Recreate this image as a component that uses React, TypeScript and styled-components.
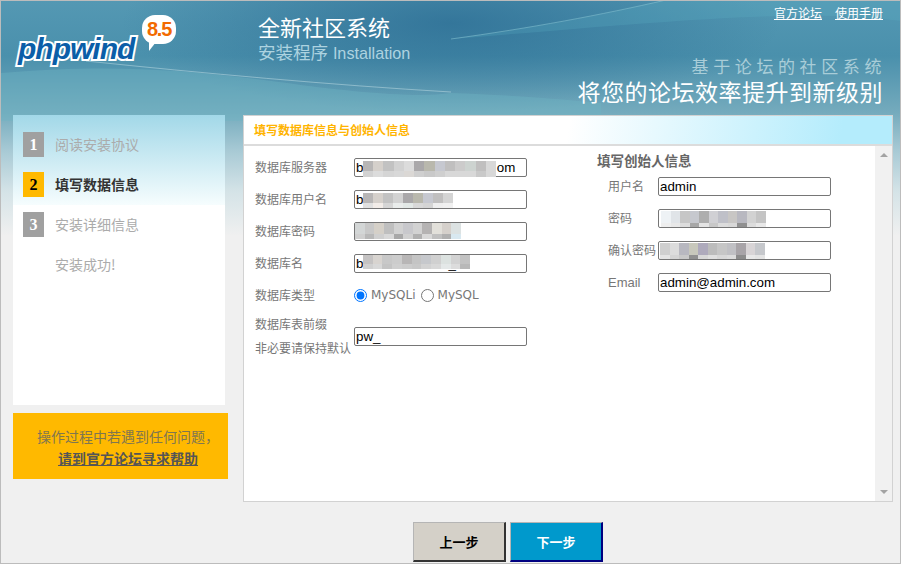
import React from 'react';
import styled, { createGlobalStyle } from 'styled-components';

const GlobalStyle = createGlobalStyle`
  html, body {
    margin: 0;
    padding: 0;
    background: #f0f0f0;
  }
  body {
    font-family: "Liberation Sans", "Noto Sans CJK SC", sans-serif;
  }
`;

const CJK = `"Noto Sans CJK SC", "Liberation Sans", sans-serif`;
const HEAD = `"Liberation Sans", "Noto Sans CJK SC", sans-serif`;

const Page = styled.div`
  position: relative;
  box-sizing: border-box;
  width: 901px;
  height: 564px;
  overflow: hidden;
  border: 1px solid #bcbcbc;
  background:
    radial-gradient(ellipse 330px 90px at 450px 22px, rgba(40, 105, 145, 0.7), rgba(40, 105, 145, 0) 100%),
    linear-gradient(180deg, #5498b3 0, #4a90ac 55px, #75abbd 112px, #a8cad5 150px, #d4e3e7 190px, #f0f0f0 235px);
`;

const Swoosh = styled.svg`
  position: absolute;
  left: 0;
  top: 0;
`;

const Header = styled.header`
  position: relative;
  display: flex;
  height: 114px;
  padding: 0 17px 0 14px;
`;

const Logo = styled.div`
  position: relative;
  width: 243px;
  flex: none;
`;

const LogoWord = styled.span`
  position: absolute;
  left: 3px;
  top: 31px;
  font: italic bold 30px "Liberation Sans", sans-serif;
  letter-spacing: -1px;
  color: #0b5ea8;
  -webkit-text-stroke: 4px #fff;
  paint-order: stroke fill;
`;

const Bubble = styled.span`
  position: absolute;
  left: 127px;
  top: 14px;
  width: 34px;
  height: 29px;
  border-radius: 13px;
  background: #fff;
  color: #f26a00;
  font: bold 20px/28px "Liberation Sans", sans-serif;
  letter-spacing: -1.2px;
  text-align: center;

  &::after {
    content: '';
    position: absolute;
    left: 7px;
    top: 27px;
    border-top: 9px solid #fff;
    border-right: 7px solid transparent;
  }
`;

const Product = styled.div`
  padding-top: 15px;
  font-family: ${HEAD};
`;

const ProductName = styled.div`
  font-size: 22px;
  line-height: 26px;
  color: #fff;
`;

const ProductSub = styled.div`
  font-size: 17.5px;
  line-height: 22px;
  color: #add3e0;

  span {
    font: 16.2px "Liberation Sans", sans-serif;
  }
`;

const Aside = styled.div`
  margin-left: auto;
  display: flex;
  flex-direction: column;
  align-items: flex-end;
  font-family: ${HEAD};
`;

const TopLinks = styled.nav`
  display: flex;
  gap: 13px;
  padding-top: 5px;
  height: 40px;
`;

const TopLink = styled.a`
  font-size: 12px;
  line-height: 16px;
  color: #fff;
  text-decoration: underline;
`;

const Slogan = styled.div`
  margin-top: 12px;
  margin-right: -3px;
  font-size: 17px;
  line-height: 20px;
  letter-spacing: 4.6px;
  color: #a9cdd8;
`;

const Tagline = styled.div`
  margin-top: 2px;
  font-size: 23px;
  line-height: 27px;
  letter-spacing: 0.5px;
  color: #fff;
`;

const Columns = styled.div`
  position: relative;
  display: flex;
  gap: 15px;
  padding: 0 7px 0 12px;
`;

const Side = styled.div`
  width: 215px;
  flex: none;
  display: flex;
  flex-direction: column;
  gap: 8px;
`;

const Steps = styled.ol`
  box-sizing: border-box;
  width: 212px;
  height: 290px;
  margin: 0;
  padding: 17px 0 0 10px;
  list-style: none;
  display: flex;
  flex-direction: column;
  gap: 15px;
  background: linear-gradient(180deg, #a2d8e8 0, #f6fdfe 90px, #fff 90px);
`;

const Step = styled.li`
  display: flex;
  align-items: center;
  gap: 11px;
  height: 25px;
`;

const StepNo = styled.span<{ $active?: boolean; $blank?: boolean }>`
  width: 21px;
  height: 25px;
  flex: none;
  text-align: center;
  font: bold 16px/25px "Liberation Serif", serif;
  color: ${(p) => (p.$active ? '#000' : '#fff')};
  background: ${(p) => (p.$blank ? 'transparent' : p.$active ? '#ffb900' : '#a0a0a0')};
`;

const StepLabel = styled.span<{ $active?: boolean }>`
  padding-bottom: 2px;
  font-family: ${CJK};
  font-size: 14px;
  font-weight: ${(p) => (p.$active ? 700 : 400)};
  color: ${(p) => (p.$active ? '#333' : '#ababab')};
`;

const Help = styled.div`
  box-sizing: border-box;
  height: 66px;
  padding: 12px 0 0 15px;
  background: #ffb900;
  font-family: ${CJK};
  font-size: 14px;
  line-height: 22px;
  color: #7f7650;
  text-align: center;

  a {
    display: block;
    font-weight: 700;
    color: #555;
    text-decoration: underline;
  }
`;

const Panel = styled.section`
  box-sizing: border-box;
  width: 650px;
  height: 387px;
  border: 1px solid #d2d2d2;
  background: #fff;
  display: flex;
  flex-direction: column;
`;

const PanelTitle = styled.h2`
  box-sizing: border-box;
  height: 30px;
  margin: 0;
  padding-left: 10px;
  border-bottom: 2px solid #dcdcdc;
  background: linear-gradient(100deg, #fff 50%, #b4ecfc 92%);
  font: 700 12px/28px ${CJK};
  color: #ffb400;
`;

const PanelBody = styled.div`
  flex: 1;
  display: flex;
  min-height: 0;
`;

const FormArea = styled.div`
  flex: 1;
  display: flex;
  padding: 5px 0 0 11px;
`;

const DbColumn = styled.div`
  width: 342px;
  flex: none;
`;

const FounderColumn = styled.div`
  width: 260px;
  flex: none;
`;

const FounderHeading = styled.h3`
  margin: 0;
  height: 19px;
  font: 700 13.5px/18px ${CJK};
  color: #666;
`;

const Row = styled.div<{ $tall?: boolean; $indent?: boolean }>`
  display: flex;
  align-items: center;
  height: ${(p) => (p.$tall ? 50 : 32)}px;
  padding-left: ${(p) => (p.$indent ? 11 : 0)}px;
`;

const RowLabel = styled.label<{ $wide?: boolean }>`
  width: ${(p) => (p.$wide ? 50 : 99)}px;
  flex: none;
  font-family: ${CJK};
  font-size: 12px;
  line-height: 24px;
  color: #777;
  white-space: nowrap;

  b {
    font: 13px "Liberation Sans", sans-serif;
  }
`;

const FieldWrap = styled.div`
  position: relative;
  width: 173px;
  height: 19px;
`;

const Field = styled.input`
  box-sizing: border-box;
  display: block;
  width: 173px;
  height: 19px;
  margin: 0;
  padding: 0 1px;
  border: 1px solid #767676;
  border-radius: 2px;
  outline: none;
  background: #fff;
  font: 13.33px "Liberation Sans", sans-serif;
  color: #000;
`;

const Mosaic = styled.div<{ $left: number; $top: number; $w: number; $cols: number; $h: string }>`
  position: absolute;
  left: ${(p) => p.$left}px;
  top: ${(p) => p.$top}px;
  width: ${(p) => p.$w}px;
  display: grid;
  grid-template-columns: repeat(${(p) => p.$cols}, 1fr);
  grid-template-rows: ${(p) => p.$h};
  pointer-events: none;
`;

const Cell = styled.i<{ $c: string }>`
  background: ${(p) => p.$c};
`;

const RadioGroup = styled.div`
  display: flex;
  align-items: center;
  font: 12px "DejaVu Sans", sans-serif;
  color: #777;
`;

const Radio = styled.input`
  width: 13px;
  height: 13px;
  margin: 0 4px 0 0;
`;

const RadioText = styled.span`
  margin-right: 5px;
`;

const Scrollbar = styled.div`
  width: 17px;
  flex: none;
  background: #f1f1f1;
  display: flex;
  flex-direction: column;
  justify-content: space-between;
  align-items: center;
  padding: 7px 0;
  box-sizing: border-box;
`;

const Arrow = styled.span<{ $down?: boolean }>`
  width: 0;
  height: 0;
  border-left: 4px solid transparent;
  border-right: 4px solid transparent;
  ${(p) => (p.$down ? 'border-top: 4px solid #a3a3a3;' : 'border-bottom: 4px solid #a3a3a3;')}
`;

const Actions = styled.div`
  position: relative;
  display: flex;
  gap: 4px;
  padding: 20px 0 0 412px;
`;

const StepButton = styled.button<{ $primary?: boolean }>`
  box-sizing: border-box;
  width: 93px;
  height: 40px;
  padding: 0;
  border-style: solid;
  border-width: 1px 2px 2px 1px;
  border-color: ${(p) =>
    p.$primary ? '#b5b5b5 #000080 #000080 #b5b5b5' : '#b5b5b5 #333 #333 #b5b5b5'};
  background: ${(p) => (p.$primary ? '#0099cc' : '#d4d0c8')};
  color: ${(p) => (p.$primary ? '#fff' : '#000')};
  font: 700 13px ${CJK};
`;

interface MaskSpec {
  left: number;
  top: number;
  w: number;
  h: string;
  rows: string[][];
}

interface FieldSpec {
  label: React.ReactNode;
  value: string;
  mask?: MaskSpec;
}

const dbFields: FieldSpec[] = [
  {
    label: '数据库服务器',
    value: 'b' + ' '.repeat(36) + 'om',
    mask: {
      left: 9,
      top: 3,
      w: 133,
      h: '10px 6px',
      rows: [
        ['#b8b6b6', '#d5d0cb', '#c2c2c2', '#d2d2d2', '#dcdcdc', '#aaa8aa', '#b9b8ad', '#c6c8d0', '#c0bfbf', '#cccbcb', '#cdd3d0', '#c0bfbf', '#d8d8d8'],
        ['#d2d2d2', '#dcdcdc', '#d5d5d5', '#d8d8d8', '#dbd8d5', '#cfcfcf', '#c9c9c9', '#cfcfcf', '#d8d8d8', '#d8d8d8', '#d8d8d8', '#c9c9c9', '#d8d8d8'],
      ],
    },
  },
  {
    label: '数据库用户名',
    value: 'b',
    mask: {
      left: 9,
      top: 3,
      w: 90,
      h: '10px 5px',
      rows: [
        ['#b8b6b6', '#d5d0cb', '#c2c2c2', '#d2d2d2', '#aaa8aa', '#b9b8ad', '#c6c8d0', '#c0bfbf', '#d4d4d4'],
        ['#e0e0e0', '#f2ece8', '#d5d5d5', '#e9eceb', '#e2e8e6', '#d8d8d8', '#d4d4d4', '#eeeeee', '#f0f0f0'],
      ],
    },
  },
  {
    label: '数据库密码',
    value: '',
    mask: {
      left: 1,
      top: 1,
      w: 106,
      h: '11px 5px',
      rows: [
        ['#d3d6d6', '#c8c8c8', '#d5d0c8', '#bfbfbf', '#d2d2d2', '#c8c8cc', '#d2d2d2', '#b5b3b3', '#e2e0da', '#d5d0cb', '#dce2e2'],
        ['#cfcfcf', '#b8b8b8', '#cfcfcf', '#d8d8d8', '#a8a8a8', '#d0d0d0', '#b0b0b0', '#d8d8d8', '#c0c0c0', '#b0b0b0', '#d8e8f0'],
      ],
    },
  },
  {
    label: '数据库名',
    value: 'b' + ' '.repeat(23) + '_',
    mask: {
      left: 9,
      top: 1,
      w: 107,
      h: '9px 5px',
      rows: [
        ['#c5c3c3', '#d8d4d0', '#c8c8c8', '#cccccc', '#b8b6b6', '#c4c4c4', '#c6c8cc', '#d0d0d0', '#dce2e0', '#d2d2d2', '#c2c2c2'],
        ['#d0d0d0', '#d8d8d8', '#c4c4c4', '#cfcfcf', '#cccccc', '#c8c8c8', '#d2d2d2', '#d8d8d8', '#e4e8e8', '#dcdcdc', '#b8b8b8'],
      ],
    },
  },
];

const founderFields: FieldSpec[] = [
  { label: '用户名', value: 'admin' },
  {
    label: '密码',
    value: '',
    mask: {
      left: 3,
      top: 2,
      w: 105,
      h: '12px 4px',
      rows: [
        ['#eef2f5', '#e0e4e8', '#c6c6c6', '#c6c8ce', '#aeaeae', '#d0d0d4', '#bfc0c8', '#c8c6c4', '#b8b8c0', '#d2d2d2', '#c4c4c4'],
        ['#eeeeee', '#e8e8e8', '#dcdcdc', '#a8a8a8', '#e4e4e4', '#c8c8c8', '#dcdcdc', '#d8d8d8', '#909090', '#dcdcdc', '#e8e8e8'],
      ],
    },
  },
  {
    label: '确认密码',
    value: '',
    mask: {
      left: 2,
      top: 2,
      w: 105,
      h: '12px 4px',
      rows: [
        ['#cfcfcf', '#dcdcdc', '#b8b8c0', '#c8c8bc', '#aeaabc', '#bcbcbc', '#c6c6c6', '#c0c0c4', '#a8a4a8', '#d8d4d6', '#c6c8cc'],
        ['#e4e4e4', '#d4d4d4', '#c8c8c8', '#909090', '#d8d8d8', '#e0e0e0', '#d8d8d8', '#dcdcdc', '#8c8c8c', '#e8e8e8', '#e4e4e4'],
      ],
    },
  },
  { label: <b>Email</b>, value: 'admin@admin.com' },
];

const MaskedField: React.FC<{ field: FieldSpec }> = ({ field }) => (
  <FieldWrap>
    <Field type="text" value={field.value} readOnly />
    {field.mask && (
      <Mosaic
        $left={field.mask.left}
        $top={field.mask.top}
        $w={field.mask.w}
        $cols={field.mask.rows[0].length}
        $h={field.mask.h}
      >
        {field.mask.rows.flat().map((c, i) => (
          <Cell key={i} $c={c} />
        ))}
      </Mosaic>
    )}
  </FieldWrap>
);

const steps = [
  { no: '1', label: '阅读安装协议' },
  { no: '2', label: '填写数据信息', active: true },
  { no: '3', label: '安装详细信息' },
  { no: '', label: '安装成功!' },
];

export default function App() {
  return (
    <Page>
      <GlobalStyle />
      <Swoosh width="900" height="240" viewBox="0 0 900 240">
        <path d="M450 38 C540 26 610 12 665 -1 L900 -1 L900 20 C800 6 650 22 450 38 Z" fill="#5fb4c8" opacity="0.22" />
        <path d="M85 60 C200 72 330 84 450 91" stroke="#cfe6ec" strokeWidth="1" fill="none" opacity="0.45" />
        <path d="M0 72 C120 62 200 70 300 84 C380 94 420 96 450 92 C500 94 540 96 600 102 L600 120 L0 120 Z" fill="#6fb4c2" opacity="0.4" />
        <path d="M450 38 C530 27 600 14 665 -1" stroke="#8fcbd8" strokeWidth="1" fill="none" opacity="0.5" />
      </Swoosh>
      <Header>
        <Logo>
          <LogoWord>phpwind</LogoWord>
          <Bubble>8.5</Bubble>
        </Logo>
        <Product>
          <ProductName>全新社区系统</ProductName>
          <ProductSub>
            安装程序 <span>Installation</span>
          </ProductSub>
        </Product>
        <Aside>
          <TopLinks>
            <TopLink href="#">官方论坛</TopLink>
            <TopLink href="#">使用手册</TopLink>
          </TopLinks>
          <Slogan>基于论坛的社区系统</Slogan>
          <Tagline>将您的论坛效率提升到新级别</Tagline>
        </Aside>
      </Header>
      <Columns>
        <Side>
          <Steps>
            {steps.map((s) => (
              <Step key={s.label}>
                <StepNo $active={s.active} $blank={!s.no}>
                  {s.no}
                </StepNo>
                <StepLabel $active={s.active}>{s.label}</StepLabel>
              </Step>
            ))}
          </Steps>
          <Help>
            操作过程中若遇到任何问题，
            <a href="#">请到官方论坛寻求帮助</a>
          </Help>
        </Side>
        <Panel>
          <PanelTitle>填写数据库信息与创始人信息</PanelTitle>
          <PanelBody>
            <FormArea>
              <DbColumn>
                {dbFields.map((f, i) => (
                  <Row key={i}>
                    <RowLabel>{f.label}</RowLabel>
                    <MaskedField field={f} />
                  </Row>
                ))}
                <Row>
                  <RowLabel>数据库类型</RowLabel>
                  <RadioGroup>
                    <Radio type="radio" name="dbtype" defaultChecked />
                    <RadioText>MySQLi</RadioText>
                    <Radio type="radio" name="dbtype" />
                    <RadioText>MySQL</RadioText>
                  </RadioGroup>
                </Row>
                <Row $tall>
                  <RowLabel>
                    数据库表前缀
                    <br />
                    非必要请保持默认
                  </RowLabel>
                  <FieldWrap>
                    <Field type="text" value="pw_" readOnly />
                  </FieldWrap>
                </Row>
              </DbColumn>
              <FounderColumn>
                <FounderHeading>填写创始人信息</FounderHeading>
                {founderFields.map((f, i) => (
                  <Row key={i} $indent>
                    <RowLabel $wide>{f.label}</RowLabel>
                    <MaskedField field={f} />
                  </Row>
                ))}
              </FounderColumn>
            </FormArea>
            <Scrollbar>
              <Arrow />
              <Arrow $down />
            </Scrollbar>
          </PanelBody>
        </Panel>
      </Columns>
      <Actions>
        <StepButton type="button">上一步</StepButton>
        <StepButton type="button" $primary>
          下一步
        </StepButton>
      </Actions>
    </Page>
  );
}
